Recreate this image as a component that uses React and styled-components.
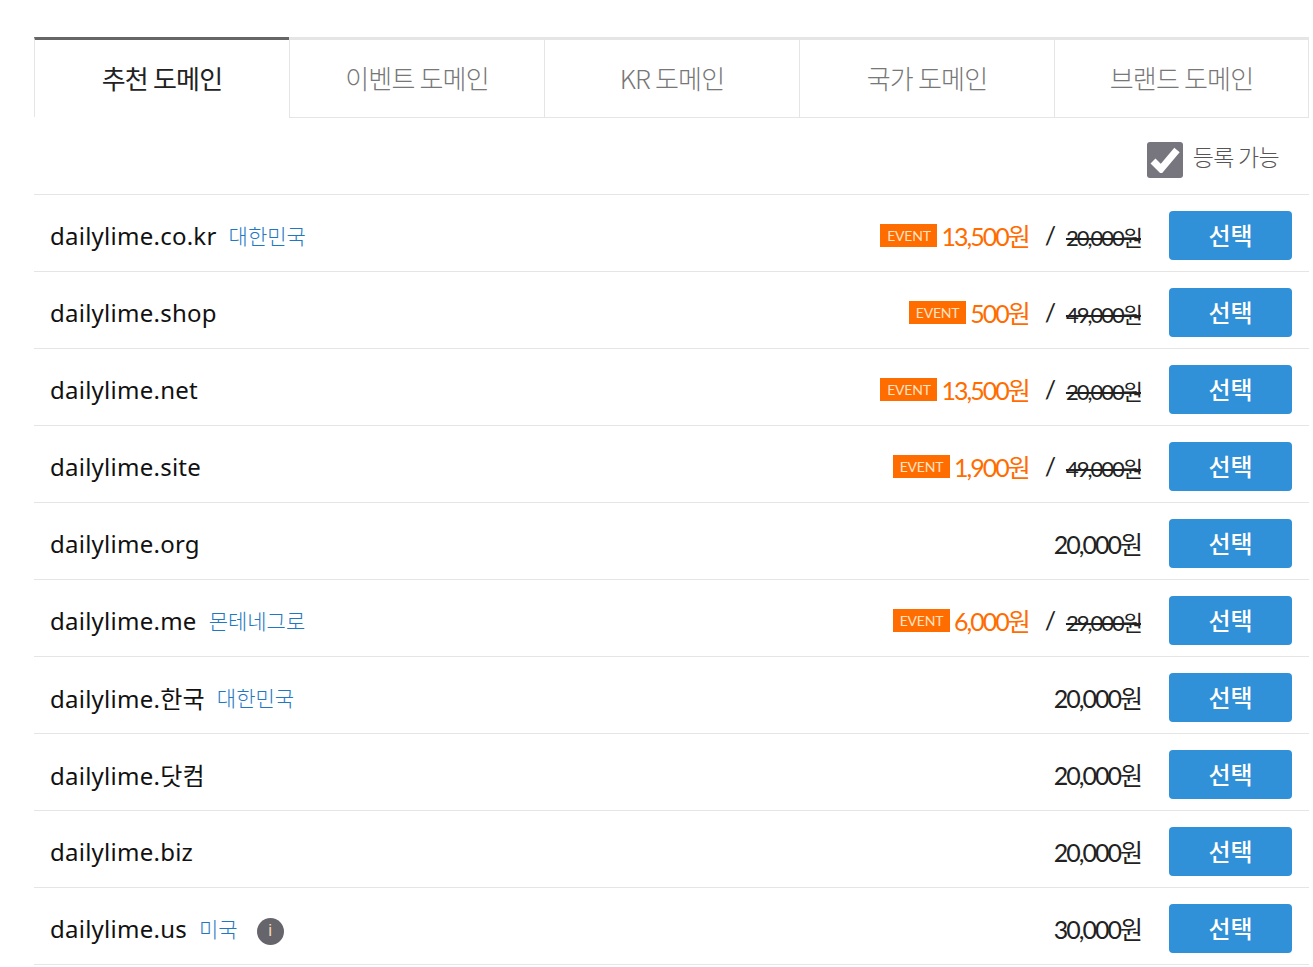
import React from 'react'
import styled, { createGlobalStyle } from 'styled-components'

const GlobalStyle = createGlobalStyle`
  html, body { margin: 0; padding: 0; background: #fff; }
  body { font-family: "Noto Sans", "Noto Sans CJK KR", sans-serif; color: #222; }
`

const Page = styled.div`
  padding: 37px 4px 0 34px;
`

const Tabs = styled.ul`
  display: grid;
  grid-template-columns: repeat(5, 255px);
  list-style: none;
  margin: 0;
  padding: 0;
`

const Tab = styled.li`
  background: #fff;
  border-top: 3px solid ${p => (p.$active ? '#666' : '#e5e5e5')};
  border-left: 1px solid #e5e5e5;
  border-bottom: ${p => (p.$active ? '0' : '1px solid #e5e5e5')};
  box-sizing: border-box;
  color: ${p => (p.$active ? '#222' : '#777')};
  font-family: "Noto Sans CJK KR", sans-serif;
  font-size: 26px;
  font-weight: ${p => (p.$active ? 400 : 300)};
  height: ${p => (p.$active ? '80px' : '81px')};
  letter-spacing: -0.8px;
  line-height: 76px;
  text-align: center;

  &:last-child {
    border-right: 1px solid #e5e5e5;
  }
`

const Filter = styled.label`
  align-items: center;
  border-bottom: 1px solid #e5e5e5;
  display: flex;
  gap: 10px;
  height: 76px;
  justify-content: flex-end;
  padding-right: 30px;
`

const CheckBox = styled.span`
  align-items: center;
  background: #77757d;
  border-radius: 3px;
  display: flex;
  height: 36px;
  justify-content: center;
  margin-top: 8px;
  width: 36px;
`

const FilterText = styled.span`
  color: #555;
  font-family: "Noto Sans CJK KR", sans-serif;
  font-size: 23px;
  font-weight: 300;
  letter-spacing: -0.7px;
`

const Row = styled.div`
  align-items: center;
  border-bottom: 1px solid #e5e5e5;
  box-sizing: border-box;
  display: flex;
  height: 77px;
  padding: 4px 17px 0 16px;
`

const Name = styled.span`
  color: #111;
  font-size: 24px;
  letter-spacing: 0.25px;
`

const Country = styled.span`
  color: #1e78c2;
  font-family: "Noto Sans CJK KR", sans-serif;
  font-size: 21px;
  font-weight: 300;
  margin-left: 12px;
`

const InfoIcon = styled.span`
  align-items: center;
  background: #66656b;
  border-radius: 50%;
  color: #f3d9b8;
  display: flex;
  font-family: "Liberation Sans", sans-serif;
  font-size: 17px;
  height: 27px;
  justify-content: center;
  margin-left: 19px;
  margin-top: 6px;
  width: 27px;
`

const Prices = styled.div`
  align-items: center;
  display: flex;
  font-family: Lato, "Noto Sans CJK KR", sans-serif;
  margin-left: auto;
`

const Badge = styled.span`
  background: #ff6c00;
  color: #ffe3c4;
  font-family: Lato, sans-serif;
  font-size: 14px;
  height: 23px;
  letter-spacing: -0.2px;
  line-height: 23px;
  margin-right: 4px;
  text-align: center;
  width: 57px;
`

const Price = styled.span`
  color: ${p => (p.$event ? '#ff6c00' : '#222')};
  font-size: 25px;
  font-weight: 400;
  letter-spacing: -2px;
`

const Slash = styled.span`
  color: #222;
  font-size: 25px;
  font-weight: 400;
  margin: 0 10px 0 16px;
`

const OldPrice = styled.del`
  color: #222;
  font-size: 22px;
  font-weight: 400;
  letter-spacing: -2px;
  margin-top: 2px;
`

const SelectButton = styled.button`
  background: #3090d8;
  border: 0;
  border-radius: 4px;
  color: #fff;
  font-family: "Noto Sans CJK KR", sans-serif;
  font-size: 24px;
  font-weight: 500;
  height: 49px;
  margin-left: 28px;
  padding: 0 0 1px;
  width: 123px;
`

const domains = [
  { name: 'dailylime.co.kr', country: '대한민국', event: '13,500원', price: '20,000원' },
  { name: 'dailylime.shop', event: '500원', price: '49,000원' },
  { name: 'dailylime.net', event: '13,500원', price: '20,000원' },
  { name: 'dailylime.site', event: '1,900원', price: '49,000원' },
  { name: 'dailylime.org', price: '20,000원' },
  { name: 'dailylime.me', country: '몬테네그로', event: '6,000원', price: '29,000원' },
  { name: 'dailylime.한국', country: '대한민국', price: '20,000원' },
  { name: 'dailylime.닷컴', price: '20,000원' },
  { name: 'dailylime.biz', price: '20,000원' },
  { name: 'dailylime.us', country: '미국', info: true, price: '30,000원' },
]

const tabs = ['추천 도메인', '이벤트 도메인', 'KR 도메인', '국가 도메인', '브랜드 도메인']

const App = () => (
  <Page>
    <GlobalStyle />
    <Tabs>
      {tabs.map((tab, i) => (
        <Tab key={tab} $active={i === 0}>{tab}</Tab>
      ))}
    </Tabs>
    <Filter>
      <CheckBox>
        <svg width="30" height="26" viewBox="0 0 30 26">
          <path d="M3 14 L11 22 L27 3" fill="none" stroke="#fff" strokeWidth="7" />
        </svg>
      </CheckBox>
      <FilterText>등록 가능</FilterText>
    </Filter>
    {domains.map(d => (
      <Row key={d.name}>
        <Name>{d.name}</Name>
        {d.country && <Country>{d.country}</Country>}
        {d.info && <InfoIcon>i</InfoIcon>}
        <Prices>
          {d.event ? (
            <>
              <Badge>EVENT</Badge>
              <Price $event>{d.event}</Price>
              <Slash>/</Slash>
              <OldPrice>{d.price}</OldPrice>
            </>
          ) : (
            <Price>{d.price}</Price>
          )}
        </Prices>
        <SelectButton>선택</SelectButton>
      </Row>
    ))}
  </Page>
)

export default App
